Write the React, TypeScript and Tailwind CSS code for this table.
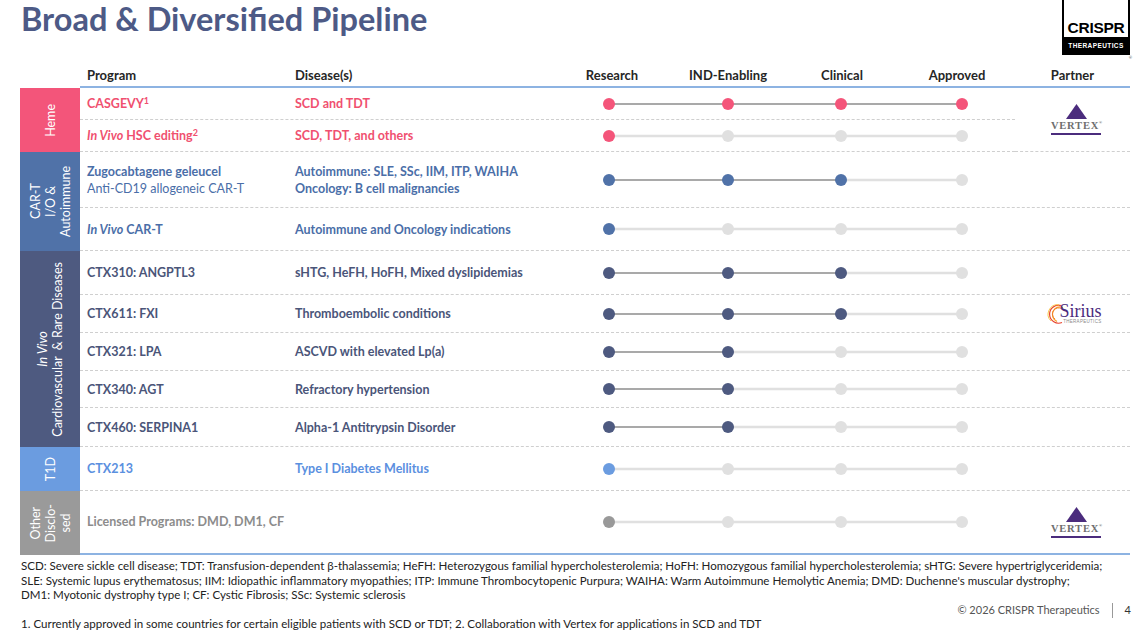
import React from "react";

const XS = [49, 168, 281, 402];

function Track({ stage, color }: { stage: number; color: string }) {
  return (
    <svg width="455" height="14" viewBox="0 0 455 14">
      {XS.slice(0, 3).map((x, i) => {
        const active = i + 1 < stage;
        return (
          <line
            key={i}
            x1={x}
            y1={7}
            x2={XS[i + 1]}
            y2={7}
            stroke={active ? "#8c8c8c" : "#e0e0e0"}
            strokeWidth={active ? 1.3 : 2.5}
          />
        );
      })}
      {XS.map((x, i) => (
        <circle key={i} cx={x} cy={7} r={6} fill={i < stage ? color : "#e0e0e0"} />
      ))}
    </svg>
  );
}

function Vertex() {
  return (
    <div className="flex flex-col items-center pl-[8px]">
      <svg width="21" height="15" viewBox="0 0 21 15">
        <polygon points="10.5,0 21,15 0,15" fill="#4b2c7d" />
      </svg>
      <div className="mt-[2px] flex items-start font-['Liberation_Serif',serif] font-bold text-[10.5px] leading-[10px] tracking-[0.8px] text-[#6e6e6e]">
        VERTEX<span className="text-[4px] leading-[4px] tracking-normal">®</span>
      </div>
      <div className="mt-[2px] h-[2px] w-[50px] bg-[#4b2c7d]" />
    </div>
  );
}

function Sirius() {
  return (
    <div className="flex items-center pl-[4px]">
      <svg width="18" height="20" viewBox="0 0 18 20" className="mr-[-6px]">
        <path d="M14 1.5 A9 9 0 1 0 15 18.5" fill="none" stroke="#e8442e" strokeWidth="1.2" />
        <path d="M16 3.5 A7.5 7.5 0 0 0 10 17.5" fill="none" stroke="#f6a22b" strokeWidth="1.2" />
        <path d="M12 0.8 A9.5 9.5 0 0 0 4 17" fill="none" stroke="#f9c74f" strokeWidth="1" />
        <path d="M15 5 A6 6 0 0 0 8 15" fill="none" stroke="#f07a2a" strokeWidth="0.9" />
      </svg>
      <div className="flex flex-col items-end">
        <div className="font-['Liberation_Serif',serif] text-[18px] leading-[16px] text-[#4b2c7d]">Sirius</div>
        <div className="font-['Liberation_Sans',sans-serif] text-[4.5px] leading-[6px] tracking-[0.3px] text-[#8a8a8a]">THERAPEUTICS</div>
      </div>
    </div>
  );
}

type Row = {
  h: string;
  program: React.ReactNode;
  disease?: React.ReactNode;
  stage: number;
  partner?: React.ReactNode;
};

function RowView({ r, color, text, withPartner }: { r: Row; color: string; text: string; withPartner: boolean }) {
  return (
    <div className={`flex ${r.h} border-b border-dashed border-[#cfcfcf]`}>
      <div className={`w-[210px] pl-[7px] flex flex-col justify-center text-[12.5px] leading-[17px] font-bold ${text}`}>{r.program}</div>
      <div className={`w-[270px] pl-[5px] flex flex-col justify-center text-[12.5px] leading-[17px] font-bold ${text}`}>{r.disease}</div>
      <div className="w-[455px] flex items-center">
        <Track stage={r.stage} color={color} />
      </div>
      {withPartner && <div className="w-[115px] flex items-center justify-center">{r.partner}</div>}
    </div>
  );
}

function Section({
  bar,
  label,
  color,
  text,
  rows,
  spanPartner,
}: {
  bar: string;
  label: React.ReactNode;
  color: string;
  text: string;
  rows: Row[];
  spanPartner?: React.ReactNode;
}) {
  return (
    <div className="flex">
      <div className={`w-[60px] ${bar} flex items-center justify-center`}>
        <div className="[writing-mode:vertical-rl] rotate-180 text-white text-[12.5px] leading-[15px] text-center">{label}</div>
      </div>
      {spanPartner ? (
        <div className="flex">
          <div className="flex flex-col w-[935px]">
            {rows.map((r, i) => (
              <RowView key={i} r={r} color={color} text={text} withPartner={false} />
            ))}
          </div>
          <div className="w-[115px] flex items-center justify-center border-b border-dashed border-[#cfcfcf]">{spanPartner}</div>
        </div>
      ) : (
        <div className="flex flex-col w-[1050px]">
          {rows.map((r, i) => (
            <RowView key={i} r={r} color={color} text={text} withPartner={true} />
          ))}
        </div>
      )}
    </div>
  );
}

const Sup = ({ children }: { children: React.ReactNode }) => (
  <span className="relative top-[-4px] text-[9px] leading-[9px]">{children}</span>
);

export default function App() {
  return (
    <div className="w-[1146px] h-[637px] bg-white overflow-hidden font-[Lato,sans-serif] text-[#222]">
      {/* Title row */}
      <div className="flex justify-between h-[60px]">
        <div className="pl-[21px] pt-[0px] text-[32.5px] leading-[37px] font-bold text-[#4d5a86]">Broad &amp; Diversified Pipeline</div>
        <div className="mr-[16px] flex flex-col items-end">
          <div className="w-[68px] h-[55px] border-x-2 border-b-2 border-black flex flex-col">
            <div className="h-[37px] flex items-end justify-center pb-[3px] font-['Liberation_Sans',sans-serif] font-bold text-[15.5px] leading-[13px] tracking-[-0.3px] text-black">CRISPR</div>
            <div className="flex-1 bg-black flex items-center justify-center font-['Liberation_Sans',sans-serif] font-bold text-[6.5px] leading-[7px] tracking-[0.4px] text-white">THERAPEUTICS</div>
          </div>
          <div className="text-[4px] leading-[5px] text-[#444] mr-[-2px]">®</div>
        </div>
      </div>

      {/* Header */}
      <div className="flex pl-[20px]">
        <div className="w-[60px]" />
        <div className="flex h-[28px] items-end pb-[3px] border-b-2 border-[#8db3e2] text-[13px] leading-[16px] font-bold text-[#262626]">
          <div className="w-[210px] pl-[7px]">Program</div>
          <div className="w-[270px] pl-[5px]">Disease(s)</div>
          <div className="w-[455px] flex">
            <div className="ml-[52px] w-0 flex justify-center whitespace-nowrap">Research</div>
            <div className="ml-[116px] w-0 flex justify-center whitespace-nowrap">IND-Enabling</div>
            <div className="ml-[114px] w-0 flex justify-center whitespace-nowrap">Clinical</div>
            <div className="ml-[115px] w-0 flex justify-center whitespace-nowrap">Approved</div>
          </div>
          <div className="w-[115px] flex justify-center">Partner</div>
        </div>
      </div>

      {/* Table */}
      <div className="pl-[20px] flex flex-col">
        <Section
          bar="bg-[#f3557a]"
          label="Heme"
          color="#f4557a"
          text="text-[#f0506f]"
          spanPartner={<Vertex />}
          rows={[
            {
              h: "h-[32px]",
              program: (
                <span>
                  CASGEVY<Sup>1</Sup>
                </span>
              ),
              disease: "SCD and TDT",
              stage: 4,
            },
            {
              h: "h-[32px]",
              program: (
                <span>
                  <i>In Vivo</i> HSC editing<Sup>2</Sup>
                </span>
              ),
              disease: "SCD, TDT, and others",
              stage: 1,
            },
          ]}
        />
        <Section
          bar="bg-[#5072a8]"
          label={
            <>
              CAR-T
              <br />
              I/O &amp;
              <br />
              Autoimmune
            </>
          }
          color="#5072a8"
          text="text-[#4a6ea8]"
          rows={[
            {
              h: "h-[56px]",
              program: (
                <>
                  <span>Zugocabtagene geleucel</span>
                  <span className="font-normal">Anti-CD19 allogeneic CAR-T</span>
                </>
              ),
              disease: (
                <>
                  <span>Autoimmune: SLE, SSc, IIM, ITP, WAIHA</span>
                  <span>Oncology: B cell malignancies</span>
                </>
              ),
              stage: 3,
            },
            {
              h: "h-[43px]",
              program: (
                <span>
                  <i>In Vivo</i> CAR-T
                </span>
              ),
              disease: "Autoimmune and Oncology indications",
              stage: 1,
            },
          ]}
        />
        <Section
          bar="bg-[#4e5a80]"
          label={
            <>
              <i>In Vivo</i>
              <br />
              Cardiovascular&nbsp; &amp; Rare Diseases
            </>
          }
          color="#4e5a80"
          text="text-[#4a5579]"
          rows={[
            { h: "h-[44px]", program: "CTX310: ANGPTL3", disease: "sHTG, HeFH, HoFH, Mixed dyslipidemias", stage: 3 },
            { h: "h-[38px]", program: "CTX611: FXI", disease: "Thromboembolic conditions", stage: 3, partner: <Sirius /> },
            { h: "h-[38px]", program: "CTX321: LPA", disease: "ASCVD with elevated Lp(a)", stage: 2 },
            { h: "h-[37px]", program: "CTX340: AGT", disease: "Refractory hypertension", stage: 2 },
            { h: "h-[39px]", program: "CTX460: SERPINA1", disease: "Alpha-1 Antitrypsin Disorder", stage: 2 },
          ]}
        />
        <Section
          bar="bg-[#6b9ce0]"
          label="T1D"
          color="#6b9ce0"
          text="text-[#5b90df]"
          rows={[{ h: "h-[44px]", program: "CTX213", disease: "Type I Diabetes Mellitus", stage: 1 }]}
        />
        <div className="flex">
          <div className="w-[60px] bg-[#9a9a9a] flex items-center justify-center">
            <div className="[writing-mode:vertical-rl] rotate-180 text-white text-[12.5px] leading-[15px] text-center">
              Other
              <br />
              Disclo-
              <br />
              sed
            </div>
          </div>
          <div className="flex h-[64px] border-b-2 border-[#8db3e2]">
            <div className="w-[480px] pl-[7px] flex items-center text-[12.5px] font-bold text-[#8c8c8c]">Licensed Programs: DMD, DM1, CF</div>
            <div className="w-[455px] flex items-center">
              <Track stage={1} color="#999999" />
            </div>
            <div className="w-[115px] flex items-center justify-center">
              <Vertex />
            </div>
          </div>
        </div>
      </div>

      {/* Footer */}
      <div className="pl-[21px] pr-[16px] pt-[4px] text-[11.55px] leading-[14.5px] text-[#222] whitespace-nowrap">
        <div>
          SCD: Severe sickle cell disease; TDT: Transfusion-dependent β-thalassemia; HeFH: Heterozygous familial hypercholesterolemia; HoFH: Homozygous familial hypercholesterolemia; sHTG: Severe hypertriglyceridemia;
        </div>
        <div>
          SLE: Systemic lupus erythematosus; IIM: Idiopathic inflammatory myopathies; ITP: Immune Thrombocytopenic Purpura; WAIHA: Warm Autoimmune Hemolytic Anemia; DMD: Duchenne's muscular dystrophy;
        </div>
        <div>DM1: Myotonic dystrophy type I; CF: Cystic Fibrosis; SSc: Systemic sclerosis</div>
        <div className="mt-[1.5px] h-[13px] flex items-center justify-end text-[11px] text-[#555]">
          <span>© 2026 CRISPR Therapeutics</span>
          <span className="mx-[12px] w-px h-[15px] bg-[#999]" />
          <span className="text-[#333] mr-[-1px]">4</span>
        </div>
        <div>1. Currently approved in some countries for certain eligible patients with SCD or TDT; 2. Collaboration with Vertex for applications in SCD and TDT</div>
      </div>
    </div>
  );
}
